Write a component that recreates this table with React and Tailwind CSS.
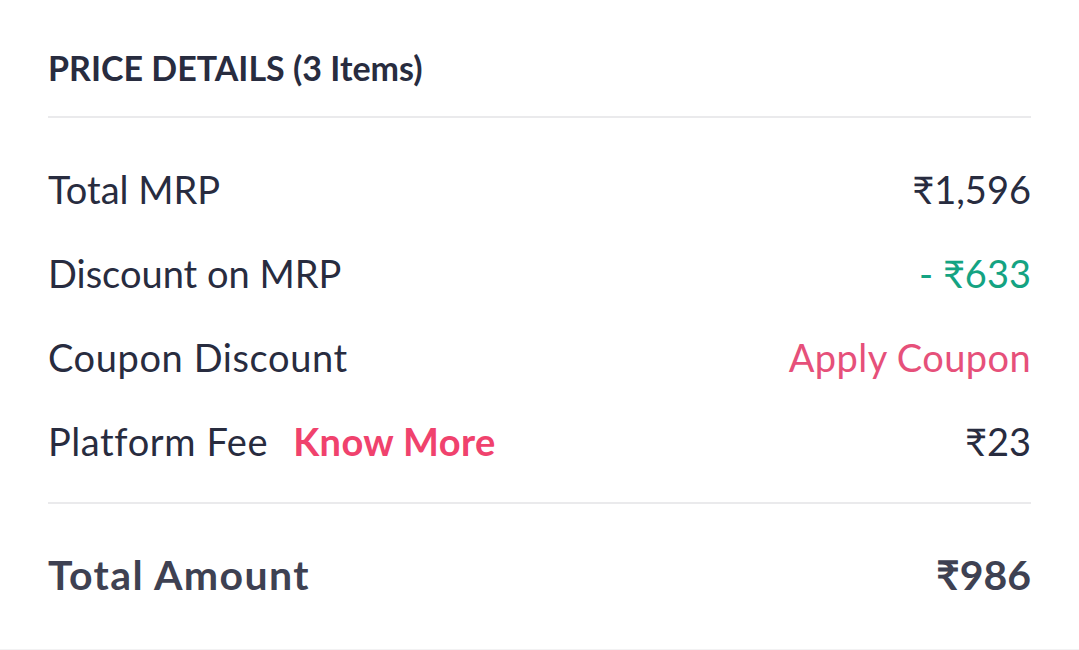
export default function App() {
  const font = { fontFamily: '"Lato", "Noto Sans", sans-serif' };
  return (
    <div className="w-[1079px] h-[650px] bg-white overflow-hidden flex flex-col" style={font}>
      <div className="flex-1 px-[48px] pt-[45px]">
        {/* Header */}
        <h2 className="text-[34px] leading-[46px] font-bold text-[#282c3f]">
          PRICE DETAILS (3 Items)
        </h2>
        <div className="mt-[25px] h-[2px] bg-[#eaeaec]" />

        {/* Rows */}
        <div className="pt-[45px] flex flex-col gap-[32px] text-[38px] leading-[52px] text-[#282c3f]">
          <div className="flex justify-between items-center">
            <span>Total MRP</span>
            <span>₹1,596</span>
          </div>
          <div className="flex justify-between items-center">
            <span>Discount on MRP</span>
            <span className="text-[#14a382]">- ₹633</span>
          </div>
          <div className="flex justify-between items-center">
            <span className="tracking-[0.6px]">Coupon Discount</span>
            <span className="text-[#e6507a] tracking-[0.4px]">Apply Coupon</span>
          </div>
          <div className="flex justify-between items-center">
            <span>
              <span className="tracking-[0.6px]">Platform Fee</span>
              <span className="ml-[25px] font-bold text-[#f0426d] tracking-[0.4px]">Know More</span>
            </span>
            <span>₹23</span>
          </div>
        </div>

        <div className="mt-[35px] h-[2px] bg-[#eaeaec]" />

        {/* Total */}
        <div className="pt-[44px] flex justify-between items-center text-[41px] leading-[54px] font-bold text-[#3e4152]">
          <span className="tracking-[1.4px]">Total Amount</span>
          <span>₹986</span>
        </div>
      </div>
      <div className="h-[1px] bg-[#f2f2f3]" />
    </div>
  );
}
